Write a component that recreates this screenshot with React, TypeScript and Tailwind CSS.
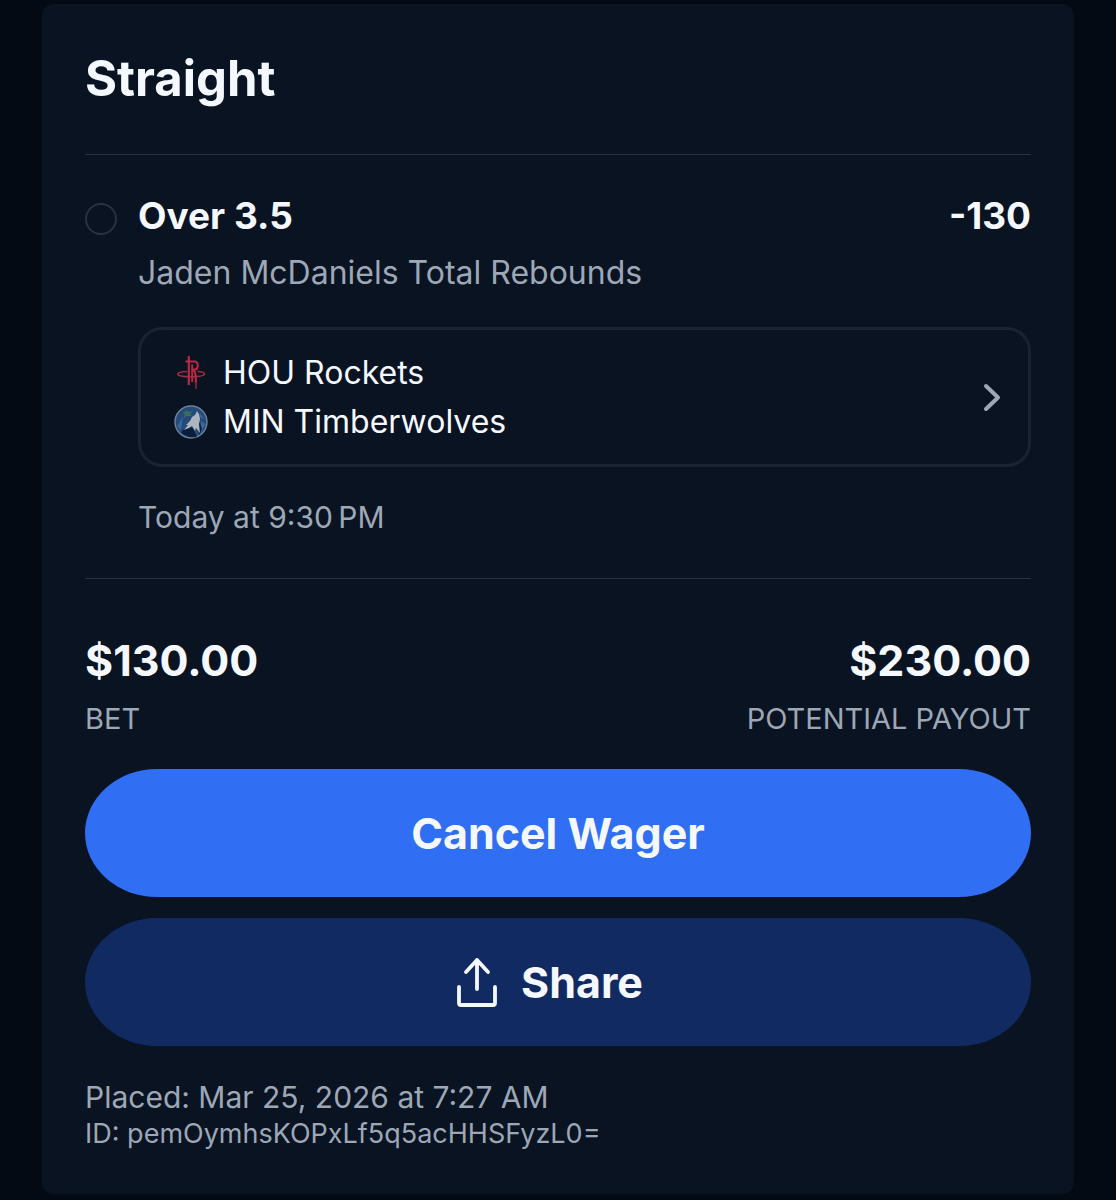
import type { ReactNode } from "react";

type Team = {
  name: string;
  logo: ReactNode;
};

const RocketsLogo = () => (
  <svg viewBox="0 0 36 36" className="size-9" fill="none" aria-hidden="true">
    <path d="M14 16.5 C8 16.8 4.5 17.8 4.6 19 C5 21 12 21.8 18 21.8 C25 21.8 31.5 20.8 31.5 18.8 C31.4 17.4 28 16.7 24.5 16.5" stroke="#9c2c42" strokeWidth="1.6" />
    <path d="M15.8 1 V30" stroke="#b52b43" strokeWidth="2.2" />
    <path d="M12.5 6.6 H22 C25.8 6.6 25.8 14.6 21.5 14.6 H19 M19.2 9.5 V27" stroke="#b52b43" strokeWidth="2" />
    <path d="M20.5 14.6 C22.6 17 23 20 23 28" stroke="#b52b43" strokeWidth="2.2" />
    <path d="M23 27 V34" stroke="#7b2539" strokeWidth="1.8" />
  </svg>
);

const TimberwolvesLogo = () => (
  <svg viewBox="0 0 36 36" className="size-9" aria-hidden="true">
    <circle cx="18" cy="18" r="16" fill="#234a78" stroke="#72829a" strokeWidth="1.4" />
    <path d="M4 22 L10 12 L8 27 Z M27 9 L32 16 L27 13 Z M28 17 L33 20 L28 28 Z" fill="#376596" />
    <path d="M8 28 L15 22 L20 24 L24 33 C17 34 11 32 8 28 Z M26 17 L29 25 L26 31 Z" fill="#0b1f3d" />
    <path d="M10 9 L14 6 L15 8 L20 7 L17 10 L19 12 L14 12 L10 14 L12 11 Z" fill="#39705d" />
    <path d="M24 7 L26 10 L27 15 L26 20 L27 29 L23 24 L22 27 L19 22 L16 24 L11 26 L15 21 L13 21 L17 17 L19 13 L22 11 Z" fill="#adb5be" />
  </svg>
);

const ShareIcon = () => (
  <svg viewBox="0 0 40 50" className="h-[50px] w-10" fill="none" stroke="currentColor" strokeWidth="3.8" strokeLinecap="round" strokeLinejoin="round" aria-hidden="true">
    <path d="M2 30 V46 Q2 48 4 48 H36 Q38 48 38 46 V30" />
    <path d="M20 32 V3 M9 15 L20 3 L31 15" />
  </svg>
);

const teams: Team[] = [
  { name: "HOU Rockets", logo: <RocketsLogo /> },
  { name: "MIN Timberwolves", logo: <TimberwolvesLogo /> },
];

const App = () => {
  return (
    <main className="min-h-screen bg-[#030a13] px-[42px] pt-1 pb-[6px] font-['Inter',sans-serif] text-[#f5f9ff]">
      <article className="rounded-xl bg-[#091321] px-[43px] pt-[47px] pb-[43px]">
        <h1 className="text-[49px] leading-[56px] font-bold">Straight</h1>

        {/* Selection */}
        <section className="mt-[47px] flex gap-[21px] border-y border-[#2b343d] pt-9 pb-[41px]">
          <input
            type="radio"
            aria-label="Over 3.5"
            className="mt-3 size-8 shrink-0 appearance-none rounded-full border-2 border-[#2a323e]"
          />
          <div className="min-w-0 flex-1">
            <div className="flex justify-between text-[37px] leading-[50px] font-bold">
              <h2>Over 3.5</h2>
              <span>-130</span>
            </div>
            <p className="mt-3 text-[32px] leading-10 text-[#9da7b6]">Jaden McDaniels Total Rebounds</p>
            <button
              type="button"
              className="mt-[34px] flex w-full items-center justify-between rounded-3xl border-[3px] border-[#1a2431] py-[18px] pr-[26px] pl-8 text-left"
            >
              <span className="flex flex-col">
                {teams.map((team) => (
                  <span key={team.name} className="flex items-center gap-[14px] text-[32px] leading-[49px]">
                    {team.logo}
                    {team.name}
                  </span>
                ))}
              </span>
              <svg viewBox="0 0 20 30" className="h-[30px] w-5" fill="none" stroke="#9da7b6" strokeWidth="4" strokeLinecap="round" strokeLinejoin="round" aria-hidden="true">
                <path d="M4 4 L16 15.5 L4 27" />
              </svg>
            </button>
            <p className="mt-[30px] text-[30px] leading-10 text-[#9da7b6]">Today at 9:30{"\u202f"}PM</p>
          </div>
        </section>

        {/* Amounts */}
        <dl className="mt-[53px] flex justify-between">
          <div className="flex flex-col-reverse gap-[11px]">
            <dt className="text-[29px] leading-10 text-[#9da7b6]">BET</dt>
            <dd className="text-[43px] leading-[56px] font-bold">$130.00</dd>
          </div>
          <div className="flex flex-col-reverse gap-[11px] text-right">
            <dt className="text-[29px] leading-10 text-[#9da7b6]">POTENTIAL PAYOUT</dt>
            <dd className="text-[43px] leading-[56px] font-bold">$230.00</dd>
          </div>
        </dl>

        {/* Actions */}
        <div className="mt-[30px] flex flex-col gap-[21px] text-[43px] font-bold">
          <button type="button" className="h-32 rounded-[72px/64px] bg-[#306ef3]">
            Cancel Wager
          </button>
          <button type="button" className="flex h-32 items-center justify-center gap-6 rounded-[72px/64px] bg-[#112b62] pr-4">
            <ShareIcon />
            Share
          </button>
        </div>

        <footer className="mt-[31px] text-[#9da7b6]">
          <p className="text-[30px] leading-10">Placed: Mar 25, 2026 at 7:27 AM</p>
          <p className="text-[27px] leading-[34px]">ID: pemOymhsKOPxLf5q5acHHSFyzL0=</p>
        </footer>
      </article>
    </main>
  );
};

export default App;
